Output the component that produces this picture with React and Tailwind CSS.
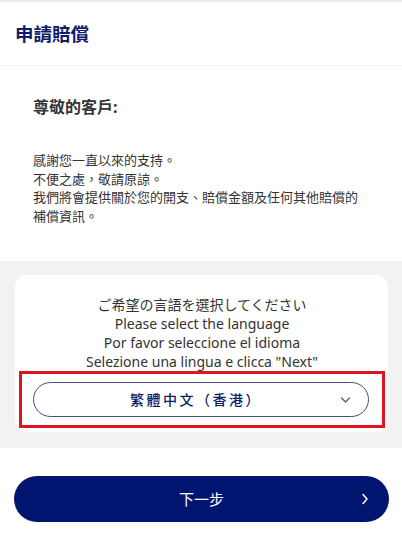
export default function App() {
  const cjk = { fontFamily: '"Noto Sans", "Noto Sans CJK TC", sans-serif' };
  return (
    <div className="w-[402px] h-[550px] bg-white overflow-hidden" style={cjk}>
      <div className="h-[66px] border-t-2 border-[#ececec] border-b border-b-[#f0f0f0] flex items-center px-[15px]">
        <h1 className="text-[18.5px] leading-[24px] font-bold text-[#0d1d6b]">申請賠償</h1>
      </div>
      <div className="pt-[30px] pb-[36px] px-[33px]">
        <h2 className="text-[16px] leading-[22px] font-bold text-[#333333]">尊敬的客戶:</h2>
        <p className="mt-[33px] text-[13px] leading-[18.5px] text-[#333333]">
          感謝您一直以來的支持。<br />
          不便之處，敬請原諒。<br />
          我們將會提供關於您的開支、賠償金額及任何其他賠償的<br />
          補償資訊。
        </p>
      </div>
      <div className="bg-[#f2f2f2] pt-[14px] pb-[16px] pl-[15px] pr-[14px]">
        <div className="bg-white rounded-[12px] pt-[20px] pb-[4px] pl-[4px] pr-[3px]">
          <div className="text-center text-[14px] leading-[19px] text-[#333333]">
            <div>ご希望の言語を選択してください</div>
            <div>Please select the language</div>
            <div>Por favor seleccione el idioma</div>
            <div>Selezione una lingua e clicca "Next"</div>
          </div>
          <div className="border-[3px] border-[#e0141e] pt-[8px] pb-[8px] pl-[11px] pr-[13px]">
            <div className="h-[35px] rounded-full border border-[#44507e] flex items-center relative">
              <span className="flex-1 text-center text-[14px] font-medium text-[#0d1d6b] tracking-[2.5px] pr-[10px]">
                繁體中文（香港）
              </span>
              <svg className="absolute right-[17px] top-[13px]" width="11" height="8" viewBox="0 0 11 8" fill="none">
                <path d="M1.5 2l4 4 4-4" stroke="#5a6080" strokeWidth="1.4" strokeLinecap="round" strokeLinejoin="round" />
              </svg>
            </div>
          </div>
        </div>
      </div>
      <div className="pt-[28px] pl-[14px] pr-[13px]">
        <button className="w-full h-[46px] rounded-full bg-[#001570] flex items-center justify-center relative text-white text-[15px]">
          下一步
          <svg className="absolute right-[20px] top-[17px]" width="8" height="12" viewBox="0 0 8 12" fill="none">
            <path d="M2 1.5l4 4.5-4 4.5" stroke="white" strokeWidth="1.5" strokeLinecap="round" strokeLinejoin="round" />
          </svg>
        </button>
      </div>
    </div>
  );
}
